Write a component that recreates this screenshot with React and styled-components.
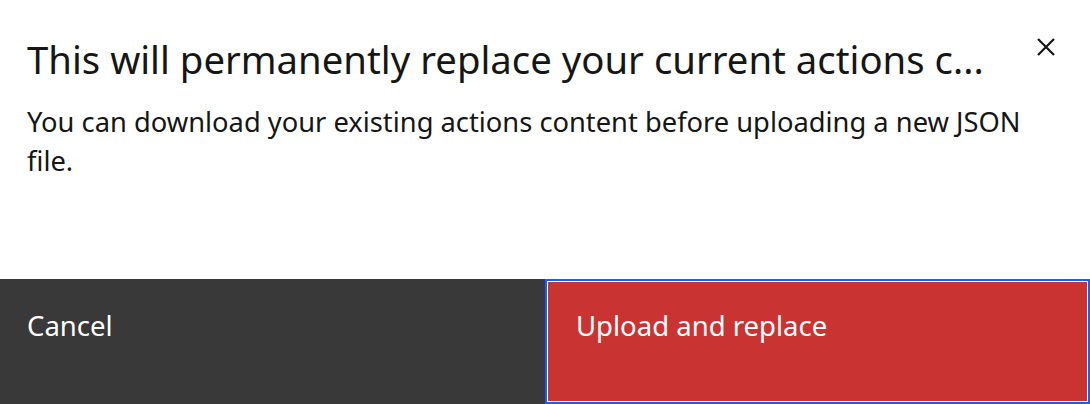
import React from 'react'
import styled, { createGlobalStyle } from 'styled-components'

const Global = createGlobalStyle`
  html, body {
    margin: 0;
    padding: 0;
    background: #ffffff;
  }
  body {
    font-family: "Noto Sans", "Liberation Sans", sans-serif;
  }
  * {
    box-sizing: border-box;
  }
`

const Modal = styled.div`
  width: 1090px;
  height: 404px;
  display: flex;
  flex-direction: column;
  background: #ffffff;
  overflow: hidden;
`

const Header = styled.div`
  display: flex;
  align-items: flex-start;
  justify-content: space-between;
  padding: 35px 26px 0 27px;
`

const Title = styled.h2`
  margin: 0;
  font-size: 38.3px;
  font-weight: 400;
  line-height: 48px;
  color: #161616;
  white-space: nowrap;
`

const Close = styled.button`
  width: 36px;
  height: 36px;
  margin-top: -6px;
  padding: 0;
  border: none;
  background: transparent;
  display: flex;
  align-items: center;
  justify-content: center;
  cursor: pointer;
`

const Body = styled.p`
  margin: 19px 0 0 27px;
  width: 1035px;
  font-size: 27.3px;
  line-height: 39px;
  color: #161616;
  flex: 1;
`

const Footer = styled.div`
  display: grid;
  grid-template-columns: 1fr 1fr;
  height: 125px;
`

const Button = styled.button`
  margin: 0;
  font-family: inherit;
  font-size: 27.5px;
  line-height: normal;
  text-align: left;
  display: flex;
  align-items: flex-start;
  color: #ffffff;
  cursor: pointer;
  background: ${p => (p.$danger ? '#c93433' : '#393939')};
  padding: ${p => (p.$danger ? '25.6px 29px' : '27.6px 27px')};
  border: ${p => (p.$danger ? '2px solid #0f62fe' : 'none')};
  box-shadow: ${p => (p.$danger ? 'inset 0 0 0 1px #ffffff' : 'none')};
`

export default function App() {
  return (
    <>
      <Global />
      <Modal>
        <Header>
          <Title>This will permanently replace your current actions c...</Title>
          <Close aria-label="Close">
            <svg width="20" height="20" viewBox="0 0 20 20">
              <path d="M2 2 L18 18 M18 2 L2 18" stroke="#161616" strokeWidth="2.2" />
            </svg>
          </Close>
        </Header>
        <Body>
          You can download your existing actions content before uploading a new JSON file.
        </Body>
        <Footer>
          <Button>Cancel</Button>
          <Button $danger>Upload and replace</Button>
        </Footer>
      </Modal>
    </>
  )
}
